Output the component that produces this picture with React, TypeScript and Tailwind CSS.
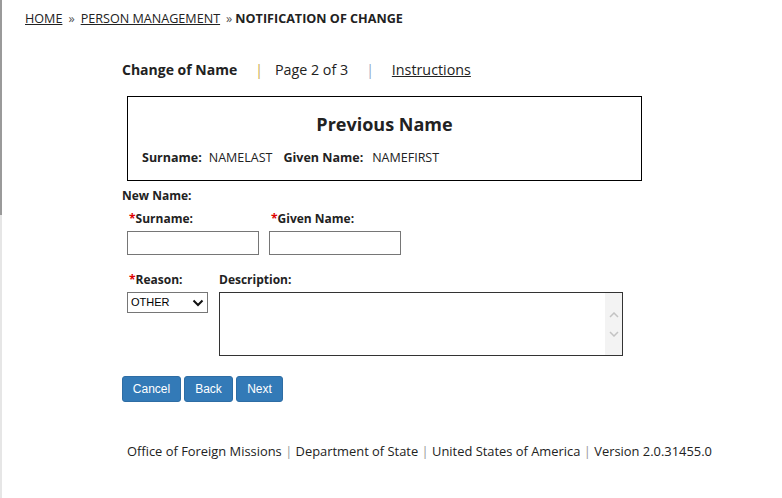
import React from "react";

const font = { fontFamily: '"Open Sans", "DejaVu Sans", sans-serif' };

function Req() {
  return <span className="text-[#e00000]">*</span>;
}

export default function App() {
  return (
    <div
      className="relative h-[498px] w-[782px] bg-white text-[#333] text-[12px] [font-family:'Open_Sans',sans-serif]"
      style={font}
    >
      <div className="absolute left-0 top-0 h-[215px] w-[2px] bg-[#9a9a9a]" />
      <div className="absolute left-0 top-[215px] h-[283px] w-[2px] bg-[#e6e6e6]" />

      <div className="pl-[25px] pt-[11px] text-[12.6px] leading-[16px] text-[#222]">
        <a className="underline">HOME</a>
        <span className="mx-[6px] text-[#555]">»</span>
        <a className="underline">PERSON MANAGEMENT</a>
        <span className="ml-[6px] mr-[3px] text-[#555]">»</span>
        <span className="font-bold">NOTIFICATION OF CHANGE</span>
      </div>

      <div className="mt-[33px] flex items-center pl-[122px] text-[14px] leading-[20px] text-[#222]">
        <span className="font-bold">Change of Name</span>
        <span className="ml-[18px] mr-[12px] text-[#c9a84a]">|</span>
        <span className="text-[14.3px]">Page 2 of 3</span>
        <span className="ml-[18px] mr-[18px] text-[#8fa7c8]">|</span>
        <a className="text-[14.3px] underline">Instructions</a>
      </div>

      <div className="ml-[127px] mt-[16px] h-[85px] w-[515px] border border-black px-[14px]">
        <div className="mt-[15px] text-center text-[18px] font-bold leading-[24px] text-[#222]">
          Previous Name
        </div>
        <div className="mt-[14px] flex items-center text-[12.5px] leading-[16px] text-[#222]">
          <span className="font-bold">Surname:</span>
          <span className="ml-[7px]">NAMELAST</span>
          <span className="ml-[11px] font-bold">Given Name:</span>
          <span className="ml-[9px]">NAMEFIRST</span>
        </div>
      </div>

      <div className="ml-[122px] mt-[7px] text-[12px] font-bold leading-[16px] text-[#222]">
        New Name:
      </div>

      <div className="ml-[127px] mt-[7px] flex gap-[10px]">
        <div className="w-[132px]">
          <div className="pl-[2px] text-[12px] font-bold leading-[16px] text-[#222]">
            <Req />Surname:
          </div>
          <input className="mt-[4px] h-[24px] w-[132px] border border-[#767676] bg-white outline-none" />
        </div>
        <div className="w-[132px]">
          <div className="pl-[2px] text-[12px] font-bold leading-[16px] text-[#222]">
            <Req />Given Name:
          </div>
          <input className="mt-[4px] h-[24px] w-[132px] border border-[#767676] bg-white outline-none" />
        </div>
      </div>

      <div className="ml-[127px] mt-[17px] flex gap-[11px]">
        <div className="w-[81px]">
          <div className="pl-[2px] text-[12px] font-bold leading-[16px] text-[#222]">
            <Req />Reason:
          </div>
          <div className="mt-[4px] flex h-[21px] w-[81px] items-center justify-between border border-[#767676] pl-[3px] pr-[3px] text-[11px] text-black [font-family:'Liberation_Sans',sans-serif]">
            <span>OTHER</span>
            <svg width="12" height="8" viewBox="0 0 12 8">
              <path d="M1.5 1.5 L6 6 L10.5 1.5" fill="none" stroke="#111" strokeWidth="2" />
            </svg>
          </div>
        </div>
        <div>
          <div className="text-[12px] font-bold leading-[16px] text-[#222]">Description:</div>
          <div className="mt-[4px] flex h-[64px] w-[404px] border border-[#333]">
            <div className="flex-1" />
            <div className="flex w-[17px] flex-col items-center justify-center gap-[13px] bg-[#f3f3f3]">
              <svg width="10" height="6" viewBox="0 0 10 6">
                <path d="M1 5 L5 1 L9 5" fill="none" stroke="#c3c3c3" strokeWidth="1.5" />
              </svg>
              <svg width="10" height="6" viewBox="0 0 10 6">
                <path d="M1 1 L5 5 L9 1" fill="none" stroke="#c3c3c3" strokeWidth="1.5" />
              </svg>
            </div>
          </div>
        </div>
      </div>

      <div className="ml-[122px] mt-[20px] flex gap-[3px] text-[12px] text-white [font-family:'Liberation_Sans',sans-serif]">
        <button className="h-[26px] w-[59px] rounded-[3px] border border-[#2e6da4] bg-[#337ab7]">Cancel</button>
        <button className="h-[26px] w-[49px] rounded-[3px] border border-[#2e6da4] bg-[#337ab7]">Back</button>
        <button className="h-[26px] w-[47px] rounded-[3px] border border-[#2e6da4] bg-[#337ab7]">Next</button>
      </div>

      <div className="ml-[127px] mt-[41px] text-[12.9px] leading-[16px] text-[#222]">
        Office of Foreign Missions <span className="text-[#999]">|</span> Department of State{" "}
        <span className="text-[#999]">|</span> United States of America{" "}
        <span className="text-[#999]">|</span> Version 2.0.31455.0
      </div>
    </div>
  );
}
